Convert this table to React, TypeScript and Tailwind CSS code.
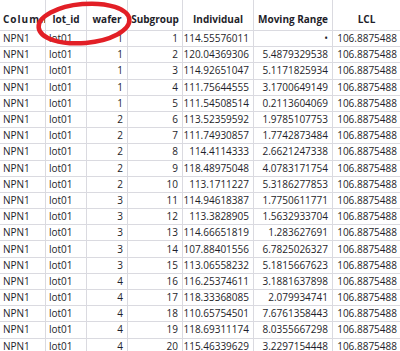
import React from 'react';

const ROWS: [number, number, string, string][] = [
  [1, 1, '114.55576011', '•'],
  [1, 2, '120.04369306', '5.4879329538'],
  [1, 3, '114.92651047', '5.1171825934'],
  [1, 4, '111.75644555', '3.1700649149'],
  [1, 5, '111.54508514', '0.2113604069'],
  [2, 6, '113.52359592', '1.9785107753'],
  [2, 7, '111.74930857', '1.7742873484'],
  [2, 8, '114.4114333', '2.6621247338'],
  [2, 9, '118.48975048', '4.0783171754'],
  [2, 10, '113.1711227', '5.3186277853'],
  [3, 11, '114.94618387', '1.7750611771'],
  [3, 12, '113.3828905', '1.5632933704'],
  [3, 13, '114.66651819', '1.283627691'],
  [3, 14, '107.88401556', '6.7825026327'],
  [3, 15, '113.06558232', '5.1815667623'],
  [4, 16, '116.25374611', '3.1881637898'],
  [4, 17, '118.33368085', '2.079934741'],
  [4, 18, '110.65754501', '7.6761358443'],
  [4, 19, '118.69311174', '8.0355667298'],
  [4, 20, '115.46339629', '3.2297154448'],
];

const cell = 'border-r border-b border-[#dadae0] overflow-hidden whitespace-nowrap';

export default function App() {
  return (
    <div className="relative w-[400px] h-[351px] overflow-hidden bg-white text-[#1e1e2a] text-[10px] font-['Open_Sans',sans-serif]">
      <div className="grid grid-cols-[46px_41px_41px_55px_71px_79px_68px]">
        {/* header */}
        <div className={`${cell} h-[31px] flex items-end pb-[3px] pl-[3px] font-bold tracking-[1px]`}>Column</div>
        <div className={`${cell} h-[31px] flex items-end justify-center pb-[3px] font-bold`}>lot_id</div>
        <div className={`${cell} h-[31px] flex items-end justify-center pb-[3px] font-bold`}>wafer</div>
        <div className={`${cell} h-[31px] flex items-end justify-center pb-[3px] font-bold`}>Subgroup</div>
        <div className={`${cell} h-[31px] flex items-end justify-center pb-[3px] font-bold`}>Individual</div>
        <div className={`${cell} h-[31px] flex items-end justify-center pb-[3px] font-bold`}>Moving Range</div>
        <div className={`${cell} h-[31px] flex items-end justify-center pb-[3px] font-bold`}>LCL</div>

        {ROWS.map(([wafer, sub, ind, mr]) => (
          <React.Fragment key={sub}>
            <div className={`${cell} h-[16.2px] flex items-center pl-[3px]`}>NPN1</div>
            <div className={`${cell} h-[16.2px] flex items-center pl-[3px]`}>lot01</div>
            <div className={`${cell} h-[16.2px] flex items-center justify-end pr-[4px]`}>{wafer}</div>
            <div className={`${cell} h-[16.2px] flex items-center justify-end pr-[4px]`}>{sub}</div>
            <div className={`${cell} h-[16.2px] flex items-center justify-end pr-[4px]`}>{ind}</div>
            <div className={`${cell} h-[16.2px] flex items-center justify-end pr-[4px]`}>{mr}</div>
            <div className={`${cell} h-[16.2px] flex items-center justify-end pr-[3px]`}>106.8875488</div>
          </React.Fragment>
        ))}
      </div>

      {/* red marker circle drawn over the header */}
      <svg className="absolute left-0 top-0 pointer-events-none" width="400" height="60">
        <ellipse cx="84" cy="23.5" rx="45.5" ry="19.5" transform="rotate(-5 84 23.5)" fill="none" stroke="#e21f26" strokeWidth="4.5" />
      </svg>
    </div>
  );
}
